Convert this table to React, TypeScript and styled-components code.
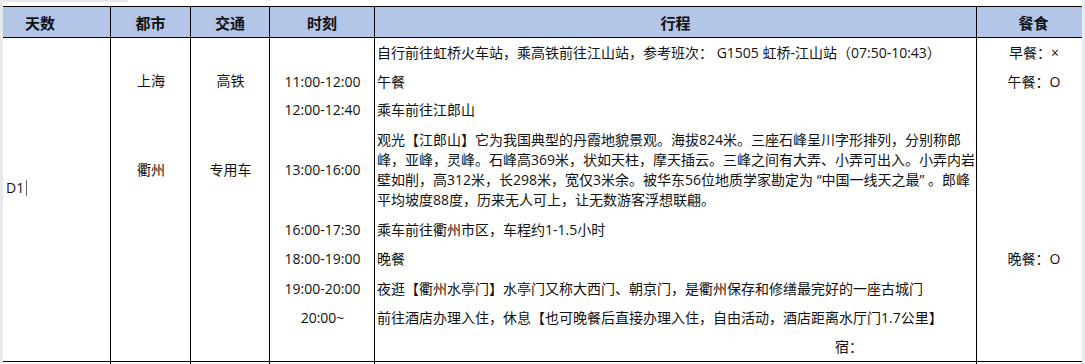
import React from 'react';
import styled, { createGlobalStyle } from 'styled-components';

const GlobalStyle = createGlobalStyle`
  html, body {
    margin: 0;
    padding: 0;
    background: #fff;
  }
  body {
    font-family: "Open Sans", "Noto Sans CJK SC", sans-serif;
    font-size: 14px;
    color: #111;
  }
`;

const Frame = styled.div`
  display: flex;
  height: 364px;
  overflow: hidden;
  background: #fff;
`;

const Gutter = styled.div<{ $w: number }>`
  flex: 0 0 ${p => p.$w}px;
  background: #e8eaee;
`;

const Viewport = styled.div`
  flex: 1;
  min-width: 0;
  overflow: hidden;
  display: flex;
  flex-direction: column;
`;

const TopStrip = styled.div`
  flex: 0 0 6px;
  &::before {
    content: '';
    display: block;
    width: 125px;
    height: 2px;
    background: #e4e6ea;
  }
`;

// the sheet is scrolled a little to the right, so the first column starts off-screen
const Sheet = styled.div`
  display: grid;
  grid-template-columns: 141px 80px 79px 105px 602px 114px;
  grid-template-rows: 31px 29px 29px 28px 92px 28px 30px 29px 29px 30px 20px;
  margin-left: -33px;
  width: max-content;
  border-top: 1px solid #000;
`;

const HeaderCell = styled.div<{ $col: number; $shift?: number }>`
  grid-column: ${p => p.$col};
  grid-row: 1;
  box-sizing: border-box;
  display: flex;
  align-items: center;
  justify-content: center;
  padding-right: ${p => p.$shift ?? 0}px;
  background: #b4c6e7;
  border-right: 1px solid #000;
  border-bottom: 1px solid #000;
  font-size: 15px;
  font-weight: 700;
  color: #111;
`;

const BodyColumn = styled.div<{ $col: number }>`
  grid-column: ${p => p.$col};
  grid-row: 2 / 11;
  box-sizing: border-box;
  border-right: 1px solid #000;
  border-bottom: 1px solid #000;
`;

const TailCell = styled.div<{ $col: number }>`
  grid-column: ${p => p.$col};
  grid-row: 11;
  border-right: 1px solid #000;
`;

const Entry = styled.div<{ $col: number; $row: string; $align?: string; $indent?: number; $lift?: number }>`
  grid-column: ${p => p.$col};
  grid-row: ${p => p.$row};
  display: flex;
  align-items: center;
  justify-content: ${p => p.$align ?? 'flex-start'};
  padding-left: ${p => p.$indent ?? 0}px;
  padding-top: ${p => p.$lift ?? 0}px;
  white-space: nowrap;
  line-height: 20px;
`;

const Para = styled.div`
  line-height: 20px;
`;

const Caret = styled.span`
  display: inline-block;
  width: 1px;
  height: 16px;
  margin-left: 2px;
  background: #666;
  vertical-align: -3px;
`;

const headers = ['天数', '都市', '交通', '时刻', '行程', '餐食'];

const schedule: { time: string; text: string | string[] }[] = [
  { time: '', text: '自行前往虹桥火车站，乘高铁前往江山站，参考班次： G1505 虹桥-江山站（07:50-10:43）' },
  { time: '11:00-12:00', text: '午餐' },
  { time: '12:00-12:40', text: '乘车前往江郎山' },
  {
    time: '13:00-16:00',
    text: [
      '观光【江郎山】它为我国典型的丹霞地貌景观。海拔824米。三座石峰呈川字形排列，分别称郎',
      '峰，亚峰，灵峰。石峰高369米，状如天柱，摩天插云。三峰之间有大弄、小弄可出入。小弄内岩',
      '壁如削，高312米，长298米，宽仅3米余。被华东56位地质学家勘定为 “中国一线天之最” 。郎峰',
      '平均坡度88度，历来无人可上，让无数游客浮想联翩。',
    ],
  },
  { time: '16:00-17:30', text: '乘车前往衢州市区，车程约1-1.5小时' },
  { time: '18:00-19:00', text: '晚餐' },
  { time: '19:00-20:00', text: '夜逛【衢州水亭门】水亭门又称大西门、朝京门，是衢州保存和修缮最完好的一座古城门' },
  { time: '20:00~', text: '前往酒店办理入住，休息【也可晚餐后直接办理入住，自由活动，酒店距离水厅门1.7公里】' },
];

const meals = [
  { row: 2, text: '早餐：×' },
  { row: 3, text: '午餐：O' },
  { row: 7, text: '晚餐：O' },
];

export default function App() {
  return (
    <>
      <GlobalStyle />
      <Frame>
        <Gutter $w={3} />
        <Viewport>
          <TopStrip />
          <Sheet>
            {headers.map((h, i) => (
              <HeaderCell key={h} $col={i + 1}>{h}</HeaderCell>
            ))}
            {headers.map((h, i) => (
              <BodyColumn key={'b' + h} $col={i + 1} />
            ))}
            {headers.map((h, i) => (
              <TailCell key={'t' + h} $col={i + 1} />
            ))}

            <Entry $col={1} $row="2 / 10" $indent={36} $lift={5}>
              D1<Caret />
            </Entry>

            <Entry $col={2} $row="2 / 5" $align="center">上海</Entry>
            <Entry $col={3} $row="2 / 5" $align="center">高铁</Entry>
            <Entry $col={2} $row="5" $align="center">衢州</Entry>
            <Entry $col={3} $row="5" $align="center">专用车</Entry>

            {schedule.map((s, i) => (
              <React.Fragment key={i}>
                {s.time && (
                  <Entry $col={4} $row={String(i + 2)} $align="center">{s.time}</Entry>
                )}
                <Entry $col={5} $row={String(i + 2)} $indent={2}>
                  {Array.isArray(s.text) ? (
                    <Para>
                      {s.text.map((line, j) => (
                        <div key={j}>{line}</div>
                      ))}
                    </Para>
                  ) : (
                    s.text
                  )}
                </Entry>
              </React.Fragment>
            ))}
            <Entry $col={5} $row="10" $indent={460}>宿：</Entry>

            {meals.map(m => (
              <Entry key={m.text} $col={6} $row={String(m.row)} $align="center">{m.text}</Entry>
            ))}
          </Sheet>
        </Viewport>
        <Gutter $w={3} />
      </Frame>
    </>
  );
}
